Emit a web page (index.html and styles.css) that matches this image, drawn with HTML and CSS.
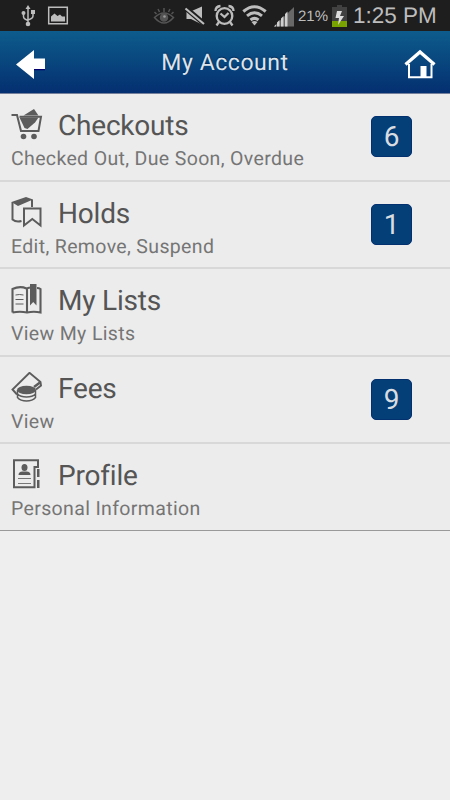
FILE: index.html
```html
<!DOCTYPE html>
<html lang="en">
<head>
  <meta charset="UTF-8">
  <title>My Account</title>
  <meta name="viewport" content="width=device-width, initial-scale=1.0">
  <link rel="stylesheet" href="styles.css">
</head>
<body>
  <!-- Status bar -->
  <div class="status-bar">
    <svg class="status-icons" width="300" height="31" viewBox="0 0 300 31">
      <!-- usb -->
      <g fill="none" stroke="#bdbdbd" stroke-width="1.5">
        <path d="M28 8v16M23.500 14v2.500q0 2.500 4.500 4M33 13v3q0 2.500-5 4"/>
        <g fill="#bdbdbd" stroke="none"><path d="M28 5l2.500 4h-5z"/><circle cx="28" cy="24" r="2.300"/><circle cx="23.500" cy="13" r="2"/><path d="M31 10h4v4h-4z"/></g>
      </g>
      <!-- screenshot saved -->
      <path d="M48.700 7.200h18.600v16.600H48.700z" fill="none" stroke="#bdbdbd" stroke-width="1.500"/>
      <path d="M51 21.500v-5l3.500-3 3 2.500 2.500-1.500 2 2h3v5z" fill="#bdbdbd"/>
      <!-- smart stay -->
      <g fill="none" stroke="#555" stroke-width="1.500">
        <path d="M154.500 17.500q9.500-9 19 0-9.500 11-19 0zM164 8v4M158 9l1.500 3M170 9l-1.500 3M154.500 12l2 2M173.500 12l-2 2"/>
        <circle cx="164" cy="17.500" r="3.500" fill="#555"/>
      </g>
      <circle cx="164.500" cy="16.500" r="1.300" fill="#999"/>
      <!-- mute -->
      <path d="M186.500 11.500h4L202 6.500v18l-11-5.500h-4.500z" fill="#bdbdbd"/>
      <path d="M185 7.500L204.500 24" stroke="#1e1e1e" stroke-width="5"/>
      <path d="M185.500 8.500L204 24" stroke="#bdbdbd" stroke-width="2.200"/>
      <!-- alarm -->
      <g fill="none" stroke="#bdbdbd" stroke-width="2.300">
        <circle cx="224.500" cy="16" r="7.800"/>
        <path d="M215.500 11q0-4.500 5-5M233.500 11q0-4.500-5-5M219 22l-2.500 3.500M230 22l2.500 3.500M220.500 13.500l4 3.500 4-4"/>
      </g>
      <!-- wifi -->
      <g fill="none" stroke="#bdbdbd" stroke-width="3">
        <path d="M243.300 11.500q11.200-9.500 22.400 0"/>
        <path d="M247 15.800q7.500-6.200 15 0"/>
        <path d="M250.500 20q4-3.300 8 0"/>
      </g>
      <path d="M251.500 22q3-2 6 0l-3 3.500z" fill="#bdbdbd"/>
      <!-- signal -->
      <path d="M274 26.500L294 7v19.500z" fill="#686868"/>
      <path d="M274 26.500l2-2v2zM277 26.500v-4l2.500-2.500v6.500zM281 26.500v-8l2.500-2.500v10.500zM285 26.500V14l2.500-2.500v15z" fill="#d0d0d0"/>
    </svg>
    <span class="battery-level">21%</span>
    <svg class="battery" width="15" height="22" viewBox="0 0 15 22">
      <path d="M5 0h5v2H5zM0 2h15v20H0z" fill="#414141"/>
      <path d="M0 16h15v6H0z" fill="#79a300"/>
      <path d="M5 6h5l-2 5h4l-6 9 1-7H3.500z" fill="#ddd"/>
    </svg>
    <span class="clock">1:25 PM</span>
  </div>

  <!-- Title bar -->
  <header class="header">
    <svg class="back" width="30" height="32" viewBox="0 0 30 32">
      <path d="M18 21.500h11" stroke="#02006c" stroke-width="1.500"/>
      <path d="M0 16.500L18 2v8.500h11V21H18v10z" fill="#fff"/>
    </svg>
    <h1>My Account</h1>
    <svg class="home" width="32" height="32" viewBox="0 0 32 32">
      <path d="M5 16v13.300h22.500V16" fill="none" stroke="#fff" stroke-width="2"/>
      <path d="M1.500 16.500L16 4l14.500 12.500" fill="none" stroke="#fff" stroke-width="3.300"/>
      <path d="M16.500 18h6v12h-6z" fill="#fff"/>
    </svg>
  </header>

  <ul class="menu">
    <li class="item">
      <div class="title">
        <svg class="icon" width="32" height="32" viewBox="0 0 32 32">
          <path d="M12.500 6.500L23 0l4.500 6.500z"/>
          <path d="M8.500 8.500h19l-3.500 5-7.500 6.500-3-1z"/>
          <path d="M.5 6H6l4 16h17.500L30 7.700H8.500" fill="none" stroke="#5c5c5c" stroke-width="2"/>
          <circle cx="12.500" cy="27.500" r="2.800"/><circle cx="23" cy="27.500" r="2.800"/>
        </svg>
        <h2>Checkouts</h2>
      </div>
      <p>Checked Out, Due Soon, Overdue</p>
      <span class="badge">6</span>
    </li>
    <li class="item">
      <div class="title">
        <svg class="icon" width="32" height="32" viewBox="0 0 32 32">
          <path d="M.5 5L15 0l7 2.500L7 9z"/>
          <path d="M1.500 5v17.500q3.500 3 9 1.500M21 2.500V10" fill="none" stroke="#5c5c5c" stroke-width="2"/>
          <path d="M13 11.500h16.500v17l-8.200-6.500-8.300 6.500z" fill="none" stroke="#5c5c5c" stroke-width="2"/>
        </svg>
        <h2>Holds</h2>
      </div>
      <p>Edit, Remove, Suspend</p>
      <span class="badge">1</span>
    </li>
    <li class="item">
      <div class="title">
        <svg class="icon" width="32" height="32" viewBox="0 0 32 32">
          <path d="M1.500 28.500V5Q9 1.500 15.500 4.500l3.500-1M26 4q2 0 3.500 1v23.500Q23 27 16 28.500 9 27 1.500 28.500M16 5v23" fill="none" stroke="#5c5c5c" stroke-width="2.100"/>
          <path d="M4.500 11q4-1 8 0M4.500 15.500h8M4.500 20h8" fill="none" stroke="#5c5c5c"/>
          <path d="M19 0h6.500v21.500L22.200 18 19 21.500z"/>
        </svg>
        <h2>My Lists</h2>
      </div>
      <p>View My Lists</p>
    </li>
    <li class="item">
      <div class="title">
        <svg class="icon" width="32" height="32" viewBox="0 0 32 32">
          <path d="M6 22.500l-4.500-5L18.500.8 29.500 10l.5 3.500-5 4" fill="none" stroke="#5c5c5c" stroke-width="1.900"/>
          <path d="M23 15l6-4.500" stroke="#5c5c5c" stroke-width="2.500"/>
          <path d="M6.500 18v7.500q3 3.500 9 3.500t9-3.500V18M6.500 22q3 3 9 3t9-3" fill="none" stroke="#5c5c5c" stroke-width="1.500"/>
          <ellipse cx="15.500" cy="18" rx="9.500" ry="4.200"/>
        </svg>
        <h2>Fees</h2>
      </div>
      <p>View</p>
      <span class="badge">9</span>
    </li>
    <li class="item">
      <div class="title">
        <svg class="icon" width="32" height="32" viewBox="0 0 32 32">
          <path d="M27 7.500V1.300H3v27h20.500V8H28" fill="none" stroke="#5c5c5c" stroke-width="2"/>
          <path d="M26 10h2.500v8H26zM26 21h2.500v8H26z"/>
          <ellipse cx="13.500" cy="8.500" rx="3" ry="3.600"/>
          <path d="M7.500 16q0-3.500 4-3.500h4q4 0 4 3.500z"/>
          <path d="M7 19.500h13M7 24.500h13" stroke="#777" stroke-width="1.100"/>
        </svg>
        <h2>Profile</h2>
      </div>
      <p>Personal Information</p>
    </li>
  </ul>
</body>
</html>
```
FILE: styles.css
```css
* {
  box-sizing: border-box;
}
body {
  margin: 0;
  background: #eee;
  font-family: Roboto, "Liberation Sans", sans-serif;
  text-rendering: geometricPrecision;
}
h1, h2, p, ul {
  margin: 0;
  padding: 0;
  font-weight: 400;
}
.status-bar {
  display: flex;
  height: 31px;
  background: #1e1e1e;
  color: #bdbdbd;
  font-family: "Liberation Sans", Arial, sans-serif;
  white-space: nowrap;
}
.status-icons {
  flex: none;
}
.battery-level {
  width: 32px;
  margin-left: -2px;
  font-size: 15px;
  line-height: 33px;
}
.battery {
  flex: none;
  margin: 5px 6px 0 2px;
}
.clock {
  font-size: 22.5px;
  line-height: 32px;
}
.header {
  display: flex;
  align-items: center;
  justify-content: space-between;
  height: 63px;
  padding: 3px 14px 0 16px;
  background: linear-gradient(#0d5c8c, #042f70);
  border-bottom: 1px solid #747f9c;
}
.header h1 {
  color: #dfe4ea;
  font-size: 23px;
  line-height: 28px;
  letter-spacing: 0.55px;
  margin-top: -2px;
  text-shadow: 0 -1px 1px #012a57;
}
.back, .home {
  flex: none;
}
.menu {
  list-style: none;
  border-bottom: 1px solid #999;
}
.item {
  position: relative;
  height: 87.5px;
  padding: 15px 11px 0;
  background: #ececec;
  border-bottom: 2px solid #d8d8d8;
}
.item:last-child {
  height: 86px;
  border-bottom: none;
}
.title {
  display: flex;
  height: 34px;
}
.icon {
  flex: none;
  fill: #5c5c5c;
  margin-right: 15px;
}
.title h2 {
  color: #555;
  font-size: 28px;
  line-height: 34px;
  letter-spacing: -0.2px;
}
.item p {
  color: #757575;
  font-size: 19.5px;
  line-height: 24px;
  letter-spacing: 0.35px;
  margin-top: 4px;
}
/* item count, sits on the right of the row */
.badge {
  position: absolute;
  top: 22px;
  right: 38px;
  width: 41px;
  height: 41px;
  border: 1px solid #03306f;
  border-radius: 5px;
  background: #053f78;
  color: #d9dde1;
  font-size: 28px;
  line-height: 39px;
  text-align: center;
}
```
